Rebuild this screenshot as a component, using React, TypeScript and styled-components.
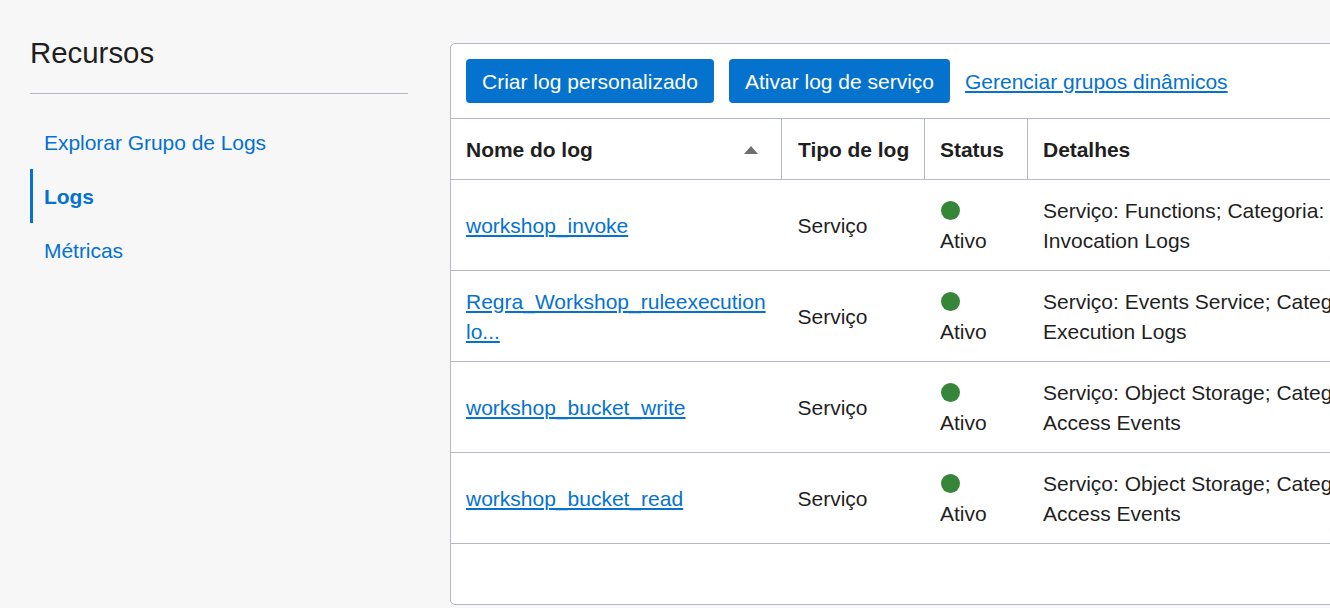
import React from "react";
import styled, { createGlobalStyle } from "styled-components";

const GlobalStyle = createGlobalStyle`
  *, *::before, *::after { box-sizing: border-box; }
  html, body { margin: 0; padding: 0; overflow: hidden; background: #f7f7f7; }
  body { font-family: "Liberation Sans", Arial, sans-serif; font-size: 21px; color: #1f1f1f; }
`;

const Page = styled.div`
  display: flex;
  align-items: flex-start;
  width: 1330px;
  height: 608px;
  overflow: hidden;
`;

const Sidebar = styled.aside`
  flex: none;
  width: 378px;
  margin: 34px 42px 0 30px;
`;

const SidebarTitle = styled.h2`
  margin: 0;
  height: 60px;
  border-bottom: 1px solid #b3b8c2;
  font-size: 29.4px;
  font-weight: 400;
  line-height: 38px;
`;

const ResourceNav = styled.nav`
  display: flex;
  flex-direction: column;
  margin-top: 21px;
`;

const NavLink = styled.a<{ $active?: boolean }>`
  height: 54px;
  padding-left: 11px;
  border-left: 3px solid ${(p) => (p.$active ? "#0572ce" : "transparent")};
  color: #0572ce;
  font-weight: ${(p) => (p.$active ? 700 : 400)};
  letter-spacing: -0.04px;
  line-height: 55px;
`;

const Panel = styled.section`
  flex: none;
  width: 930px;
  height: 562px;
  margin-top: 43px;
  border: 1px solid #b3b8c2;
  border-radius: 5px;
  background: #fff;
`;

const Toolbar = styled.div`
  display: flex;
  align-items: center;
  gap: 15px;
  height: 74px;
  padding: 0 15px;
`;

const PrimaryButton = styled.button<{ $width: number }>`
  width: ${(p) => p.$width}px;
  height: 44px;
  padding: 2px 0 0;
  border: 0;
  border-radius: 4px;
  background: #0572ce;
  color: #fff;
  font: inherit;
  white-space: nowrap;
`;

const Link = styled.a`
  color: #0572ce;
  text-decoration: underline;
  text-decoration-thickness: 2px;
  text-underline-offset: 2px;
`;

const ToolbarLink = styled(Link)`
  padding-top: 2px;
  line-height: 24px;
`;

const HeaderRow = styled.div`
  display: grid;
  grid-template-columns: 330px 143px 103px 352px;
  height: 61px;
  border-top: 1px solid #b3b8c2;
`;

const HeaderCell = styled.div<{ $indent?: number }>`
  display: flex;
  align-items: center;
  justify-content: space-between;
  padding: 2px 15px 0 ${(p) => p.$indent ?? 15}px;
  font-weight: 700;
  letter-spacing: -0.04px;
  white-space: nowrap;
  & + & { border-left: 1px solid #b3b8c2; }
`;

const SortIcon = styled.svg`
  width: 14px;
  height: 8px;
  margin-right: 8px;
`;

const Row = styled.div`
  display: grid;
  grid-template-columns: 331.5px 142.5px 103px 351px;
  height: 91px;
  border-top: 1px solid #b3b8c2;
`;

const Cell = styled.div`
  display: flex;
  flex-direction: column;
  align-items: flex-start;
  justify-content: center;
  padding: 1px 0 0 15px;
  line-height: 30px;
  white-space: nowrap;
`;

const StatusDot = styled.span`
  width: 19px;
  height: 19px;
  margin: 5px 0 6px 1px;
  border-radius: 50%;
  background: #368639;
`;

const Footer = styled.div`
  border-top: 1px solid #b3b8c2;
`;

const logs = [
  { name: ["workshop_invoke"], details: ["Serviço: Functions; Categoria:", "Invocation Logs"] },
  { name: ["Regra_Workshop_ruleexecution", "lo..."], details: ["Serviço: Events Service; Categoria: Rule", "Execution Logs"] },
  { name: ["workshop_bucket_write"], details: ["Serviço: Object Storage; Categoria: Write", "Access Events"] },
  { name: ["workshop_bucket_read"], details: ["Serviço: Object Storage; Categoria: Read", "Access Events"] },
];

export default function App() {
  return (
    <>
      <GlobalStyle />
      <Page>
        <Sidebar>
          <SidebarTitle>Recursos</SidebarTitle>
          <ResourceNav>
            <NavLink>Explorar Grupo de Logs</NavLink>
            <NavLink $active>Logs</NavLink>
            <NavLink>Métricas</NavLink>
          </ResourceNav>
        </Sidebar>
        <Panel>
          <Toolbar>
            <PrimaryButton $width={248}>Criar log personalizado</PrimaryButton>
            <PrimaryButton $width={221}>Ativar log de serviço</PrimaryButton>
            <ToolbarLink>Gerenciar grupos dinâmicos</ToolbarLink>
          </Toolbar>
          <HeaderRow>
            <HeaderCell>
              Nome do log
              <SortIcon viewBox="0 0 14 8"><path d="M0 8L7 0L14 8Z" fill="#6f6f6f" /></SortIcon>
            </HeaderCell>
            <HeaderCell $indent={16}>Tipo de log</HeaderCell>
            <HeaderCell>Status</HeaderCell>
            <HeaderCell>Detalhes</HeaderCell>
          </HeaderRow>
          {logs.map((log) => (
            <Row key={log.name[0]}>
              <Cell>{log.name.map((line) => <Link key={line}>{line}</Link>)}</Cell>
              <Cell>Serviço</Cell>
              <Cell><StatusDot />Ativo</Cell>
              <Cell>{log.details.map((line) => <span key={line}>{line}</span>)}</Cell>
            </Row>
          ))}
          <Footer />
        </Panel>
      </Page>
    </>
  );
}
